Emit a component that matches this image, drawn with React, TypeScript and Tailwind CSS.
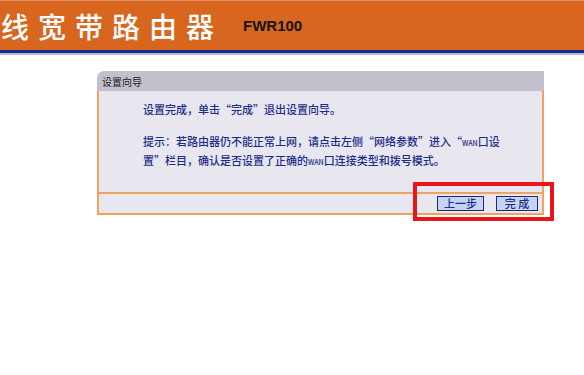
export default function App() {
  const cjk = { fontFamily: '"Noto Sans CJK SC", "Noto Sans", sans-serif' };
  return (
    <div className="relative w-[584px] h-[375px] bg-white overflow-hidden" style={cjk}>
      {/* top banner */}
      <div className="h-[50px] bg-[#d8661f] border-t border-[#e3916a] flex items-center">
        <span className="ml-[1px] text-[28px] leading-none tracking-[9px] text-white font-medium">线宽带路由器</span>
        <span className="ml-[20px] mt-[2px] text-[15px] font-bold text-[#141414]" style={{ fontFamily: '"Liberation Sans", Arial, sans-serif' }}>
          FWR100
        </span>
      </div>
      <div className="h-[3px] bg-[#1b2780]" />
      <div className="h-[2px] bg-[#aebbe4]" />

      {/* wizard panel */}
      <div className="mt-[16px] ml-[97px] w-[447px]">
        <div className="h-[20px] bg-[#c3bfcd] rounded-tl-[7px] flex items-center pl-[5px] text-[10px] text-[#222]">
          设置向导
        </div>
        <div className="border-x-2 border-[#f0a35e] bg-[#e8e6ef]">
          <div className="h-[101px] pl-[44px] pt-[10px] text-[11px] leading-[17px] text-[#1d2d88] font-medium">
            <p>设置完成，单击“完成”退出设置向导。</p>
            <p className="mt-[15px]">
              提示：若路由器仍不能正常上网，请点击左侧“网络参数”进入“<span className="text-[7px]">WAN</span>口设
              <br />
              置”栏目，确认是否设置了正确的<span className="text-[7px]">WAN</span>口连接类型和拨号模式。
            </p>
          </div>
          <div className="h-[2px] bg-[#f0a35e]" />
          <div className="h-[19px] flex items-center justify-end gap-[12px] pr-[4px]">
            <button className="w-[47px] h-[15px] bg-[#c6d3f4] border border-[#1f2c6c] text-[11px] leading-none text-[#1d2d88] font-medium">
              上一步
            </button>
            <button className="w-[42px] h-[15px] bg-[#c6d3f4] border border-[#1f2c6c] text-[11px] leading-none text-[#1d2d88] font-medium">
              完 成
            </button>
          </div>
        </div>
        <div className="h-[2px] bg-[#f0a35e]" />
      </div>

      {/* highlight annotation */}
      <div className="absolute left-[413px] top-[182px] w-[141px] h-[39px] border-[4px] border-[#e8161b]" />
    </div>
  );
}
